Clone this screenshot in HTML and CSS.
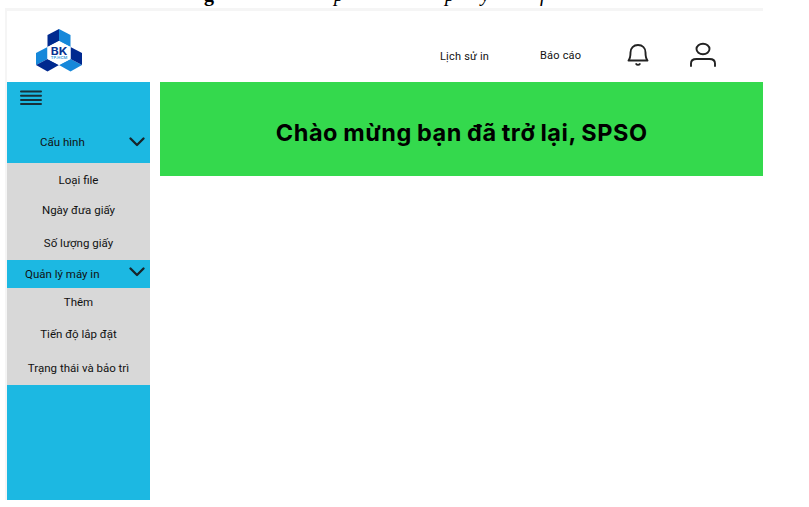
FILE: index.html
```html
<!DOCTYPE html>
<html lang="vi">
<head>
<meta charset="utf-8">
<title>SPSO</title>
<link rel="stylesheet" href="styles.css">
</head>
<body>
<div class="caption"><b>g</b><i>p</i><i>p</i><i>y</i><i>f</i></div>
<div class="app">
  <header class="header">
    <svg class="logo" viewBox="0 0 48 44" width="48" height="44">
      <path fill="#00298f" d="M12.500 7 24 1v12l-11.500 6z"/>
      <path fill="#1688da" d="M24 1l11.500 6v12L24 13z"/>
      <path fill="#1688da" d="M1 25l11.500-6v12L1 37z"/>
      <path fill="#00298f" d="M1 37l11.500-6L24 37l-11.500 6.500z"/>
      <path fill="#1688da" d="M24 37l11.500-6L47 37l-11.500 6.500z"/>
      <path fill="#00298f" d="M35.500 19L47 25v12l-11.500-6z"/>
      <path fill="#fff" d="M24 13l11.500 6v12L24 37l-11.500-6V19z"/>
      <text class="logo-bk" x="24" y="26.500" text-anchor="middle" textLength="16.500" lengthAdjust="spacingAndGlyphs">BK</text>
      <text class="logo-city" x="24" y="31" text-anchor="middle" textLength="16.500" lengthAdjust="spacingAndGlyphs">TP.HCM</text>
    </svg>
    <nav class="nav">
      <a class="history">Lịch sử in</a>
      <a class="report">Báo cáo</a>
      <svg class="bell" viewBox="0 0 24 24" width="24" height="24" fill="none" stroke="#222" stroke-width="1.900" stroke-linecap="round" stroke-linejoin="round">
        <path d="M2.500 17.500c1.800-2.200 2-4 2-8C4.500 5 7.500 2 12 2s7.500 3 7.500 7.500c0 4 .2 5.800 2 8z"/>
        <path d="M10.200 21c.8 1.200 2.800 1.200 3.600 0"/>
      </svg>
      <svg class="user" viewBox="0 0 28 26" width="28" height="26" fill="none" stroke="#222" stroke-width="1.900" stroke-linecap="round">
        <ellipse cx="14" cy="7" rx="6.500" ry="5.300"/>
        <path d="M2 24v-2.500Q2 17 7.500 17h13Q26 17 26 21.500V24"/>
      </svg>
    </nav>
  </header>
  <div class="body">
    <aside class="sidebar">
      <svg class="menu" viewBox="0 0 22 16" width="22" height="16" stroke="#17303a" stroke-width="2" stroke-linecap="round"><path d="M1 1.500h20M1 5.700h20M1 9.900h20M1 14.100h20"/></svg>
      <div class="group config"><span>Cấu hình</span><svg class="chev" viewBox="0 0 16 10" width="16" height="10"><path d="M1.500 1.500L8 8l6.500-6.500"/></svg></div>
      <ul class="list">
        <li class="r1"><span>Loại file</span></li>
        <li class="r2"><span>Ngày đưa giấy</span></li>
        <li class="r3"><span>Số lượng giấy</span></li>
      </ul>
      <div class="group printers"><span>Quản lý máy in</span><svg class="chev" viewBox="0 0 16 10" width="16" height="10"><path d="M1.500 1.500L8 8l6.500-6.500"/></svg></div>
      <ul class="list">
        <li class="r4"><span>Thêm</span></li>
        <li class="r5"><span>Tiến độ lắp đặt</span></li>
        <li class="r6"><span>Trạng thái và bảo trì</span></li>
      </ul>
    </aside>
    <main class="main"><h1 class="banner"><span>Chào mừng bạn đã trở lại, SPSO</span></h1></main>
  </div>
</div>
</body>
</html>
```
FILE: styles.css
```css
* { box-sizing: border-box; margin: 0; padding: 0; }
body { width: 809px; height: 507px; background: #fff; overflow: hidden; color: #111; font-family: Roboto, sans-serif; }
.caption { height: 8px; padding-left: 204px; display: flex; align-items: flex-end; overflow: hidden; font: 20px/28px "Liberation Serif", serif; color: #000; }
.caption > * { height: 28px; }
.caption b { width: 130px; }
.caption i { width: 111px; }
.caption i:nth-of-type(2) { width: 36px; }
.caption i:nth-of-type(3) { width: 59px; }
.caption i:nth-of-type(4) { width: 12px; }
.app { width: 758px; height: 492px; margin-left: 5px; border-top: 3px solid #f5f5f5; border-left: 2px solid #f5f5f5; }
.header { height: 70.500px; display: flex; justify-content: space-between; align-items: flex-start; }
.logo { margin: 17px 0 0 28px; }
.logo-bk { font: bold 10.500px Inter, sans-serif; fill: #0b3292; }
.logo-city { font: bold 4px Inter, sans-serif; fill: #4aa2df; }
.nav { display: flex; align-items: flex-start; font-size: 11px; line-height: 14px; white-space: nowrap; }
.history { width: 100px; margin-top: 39px; letter-spacing: .2px; }
.report { width: 86px; margin-top: 38px; letter-spacing: .2px; }
.bell { width: 24px; margin: 32px 39px 0 0; }
.user { margin: 31px 46px 0 0; }
.body { display: flex; align-items: flex-start; gap: 10.400px; }
.sidebar { width: 143px; height: 418.500px; background: #1cb8e2; font-size: 11.500px; line-height: 14px; }
.sidebar span { white-space: nowrap; }
.menu { display: block; margin: 8px 0 0 13px; }
.group { display: flex; justify-content: space-between; align-items: center; padding-right: 5px; }
.config { height: 57px; padding: 16px 5px 0 33px; }
.printers { height: 28px; padding-left: 18px; }
.chev { fill: none; stroke: #17242a; stroke-width: 2.300; stroke-linecap: round; stroke-linejoin: round; }
.printers .chev { margin-bottom: 4px; }
.list { height: 97px; list-style: none; background: #d8d8d8; text-align: center; }
.list li { display: flex; justify-content: center; align-items: center; }
.r1 { height: 34px; }
.r2 { height: 26px; }
.r3 { height: 40px; }
.r4 { height: 29px; }
.r5 { height: 34px; }
.r6 { height: 35px; }
.main { flex: 1; }
.banner { height: 94px; display: flex; align-items: center; justify-content: center; padding-top: 8px; background: #34d94d; color: #000; font: bold 23.500px/30px Inter, sans-serif; font-optical-sizing: none; letter-spacing: .55px; word-spacing: -1px; white-space: nowrap; }
```
